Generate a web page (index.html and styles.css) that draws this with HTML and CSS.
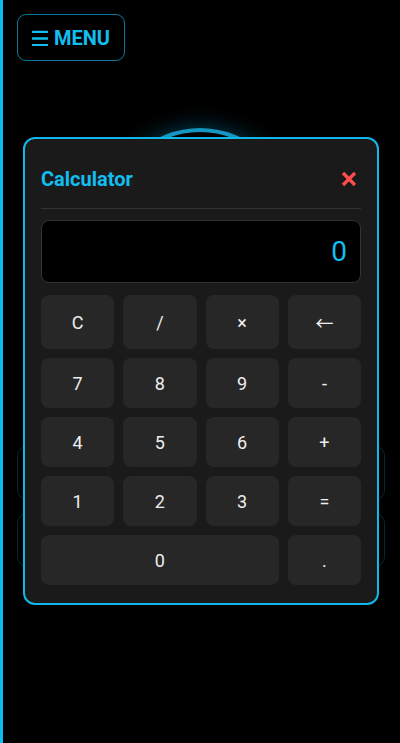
FILE: index.html
```html
<!DOCTYPE html>
<html lang="en">
<head>
<meta charset="utf-8">
<title>Calculator</title>
<link rel="stylesheet" href="styles.css">
</head>
<body>
<div class="app">
  <header class="topbar">
    <button class="menu-btn">
      <svg class="menu-icon" width="16" height="16" viewBox="0 0 16 16" aria-hidden="true">
        <rect x="0" y="0.7" width="16" height="2.4" rx="0.5"/>
        <rect x="0" y="7.3" width="16" height="2.4" rx="0.5"/>
        <rect x="0" y="13.9" width="16" height="2.4" rx="0.5"/>
      </svg>
      <span>MENU</span>
    </button>
  </header>

  <main class="backdrop">
    <div class="ring"></div>
    <div class="cards">
      <div class="card"></div>
      <div class="card"></div>
    </div>
  </main>

  <section class="modal">
    <div class="modal-head">
      <h2 class="modal-title">Calculator</h2>
      <button class="close-btn" aria-label="Close">
        <svg width="16" height="16" viewBox="0 0 16 16" aria-hidden="true">
          <path d="M2 2 L14 14 M14 2 L2 14"/>
        </svg>
      </button>
    </div>
    <div class="display">0</div>
    <div class="keys">
      <button class="key">C</button>
      <button class="key">/</button>
      <button class="key">×</button>
      <button class="key arrow">←</button>
      <button class="key">7</button>
      <button class="key">8</button>
      <button class="key">9</button>
      <button class="key">-</button>
      <button class="key">4</button>
      <button class="key">5</button>
      <button class="key">6</button>
      <button class="key">+</button>
      <button class="key">1</button>
      <button class="key">2</button>
      <button class="key">3</button>
      <button class="key">=</button>
      <button class="key wide">0</button>
      <button class="key">.</button>
    </div>
  </section>
</div>
</body>
</html>
```

FILE: styles.css
```css
* { box-sizing: border-box; }

html, body {
  margin: 0;
  padding: 0;
  background: #000;
  height: 100%;
}

body {
  font-family: Roboto, "Noto Sans", sans-serif;
  color: #eee;
  overflow: hidden;
}

.app {
  position: relative;
  min-height: 743px;
  border-left: 3px solid #0fb9ec;
}

.topbar {
  padding: 14px 0 0 14px;
}

.menu-btn {
  display: inline-flex;
  align-items: center;
  gap: 6px;
  height: 47px;
  width: 108px;
  padding: 0 0 0 14px;
  background: transparent;
  border: 1.5px solid rgba(15, 185, 236, 0.65);
  border-radius: 9px;
  color: #12bdf0;
  font-family: Roboto, sans-serif;
  font-weight: 700;
  font-size: 20px;
  letter-spacing: 0;
}

.menu-icon { fill: #12bdf0; flex: none; }

.backdrop {
  position: relative;
  height: 650px;
}

.ring {
  position: absolute;
  left: 104px;
  top: 67px;
  width: 186px;
  height: 186px;
  border-radius: 50%;
  border: 4px solid #1596c2;
  box-shadow: 0 0 22px rgba(0, 180, 240, 0.35);
}

.cards {
  position: absolute;
  left: 14px;
  right: 15px;
  top: 385px;
  display: flex;
  flex-direction: column;
  gap: 13px;
}

.card {
  height: 54px;
  border: 1px solid rgba(15, 185, 236, 0.22);
  border-radius: 10px;
}

.modal {
  position: absolute;
  left: 20px;
  top: 137px;
  width: 356px;
  background: #1a1a1a;
  border: 2px solid #12b7e9;
  border-radius: 12px;
  padding: 16px 16px 18px;
}

.modal-head {
  display: flex;
  align-items: center;
  justify-content: space-between;
  padding: 12px 0 17px;
  border-bottom: 1px solid #333;
}

.modal-title {
  margin: 0;
  font-size: 20px;
  line-height: 24px;
  font-weight: 700;
  color: #12bdf0;
}

.close-btn {
  background: none;
  border: 0;
  padding: 0;
  margin-right: 4px;
  width: 16px;
  height: 16px;
  display: flex;
}

.close-btn path {
  stroke: #ff4d4d;
  stroke-width: 3.2;
  fill: none;
}

.display {
  margin-top: 11px;
  height: 63px;
  background: #000;
  border: 1px solid #333;
  border-radius: 8px;
  color: #12bdf0;
  font-size: 28px;
  display: flex;
  align-items: center;
  justify-content: flex-end;
  padding-right: 13px;
}

.keys {
  margin-top: 12px;
  display: grid;
  grid-template-columns: repeat(4, 1fr);
  grid-template-rows: 54px repeat(4, 50px);
  gap: 9px;
}

.key {
  background: #272727;
  border: 0;
  border-radius: 8px;
  color: #eee;
  font-family: Roboto, sans-serif;
  font-size: 18px;
  padding: 0;
}

.key.arrow {
  font-family: "Noto Sans CJK JP", sans-serif;
}

.key.wide { grid-column: span 3; }
```
